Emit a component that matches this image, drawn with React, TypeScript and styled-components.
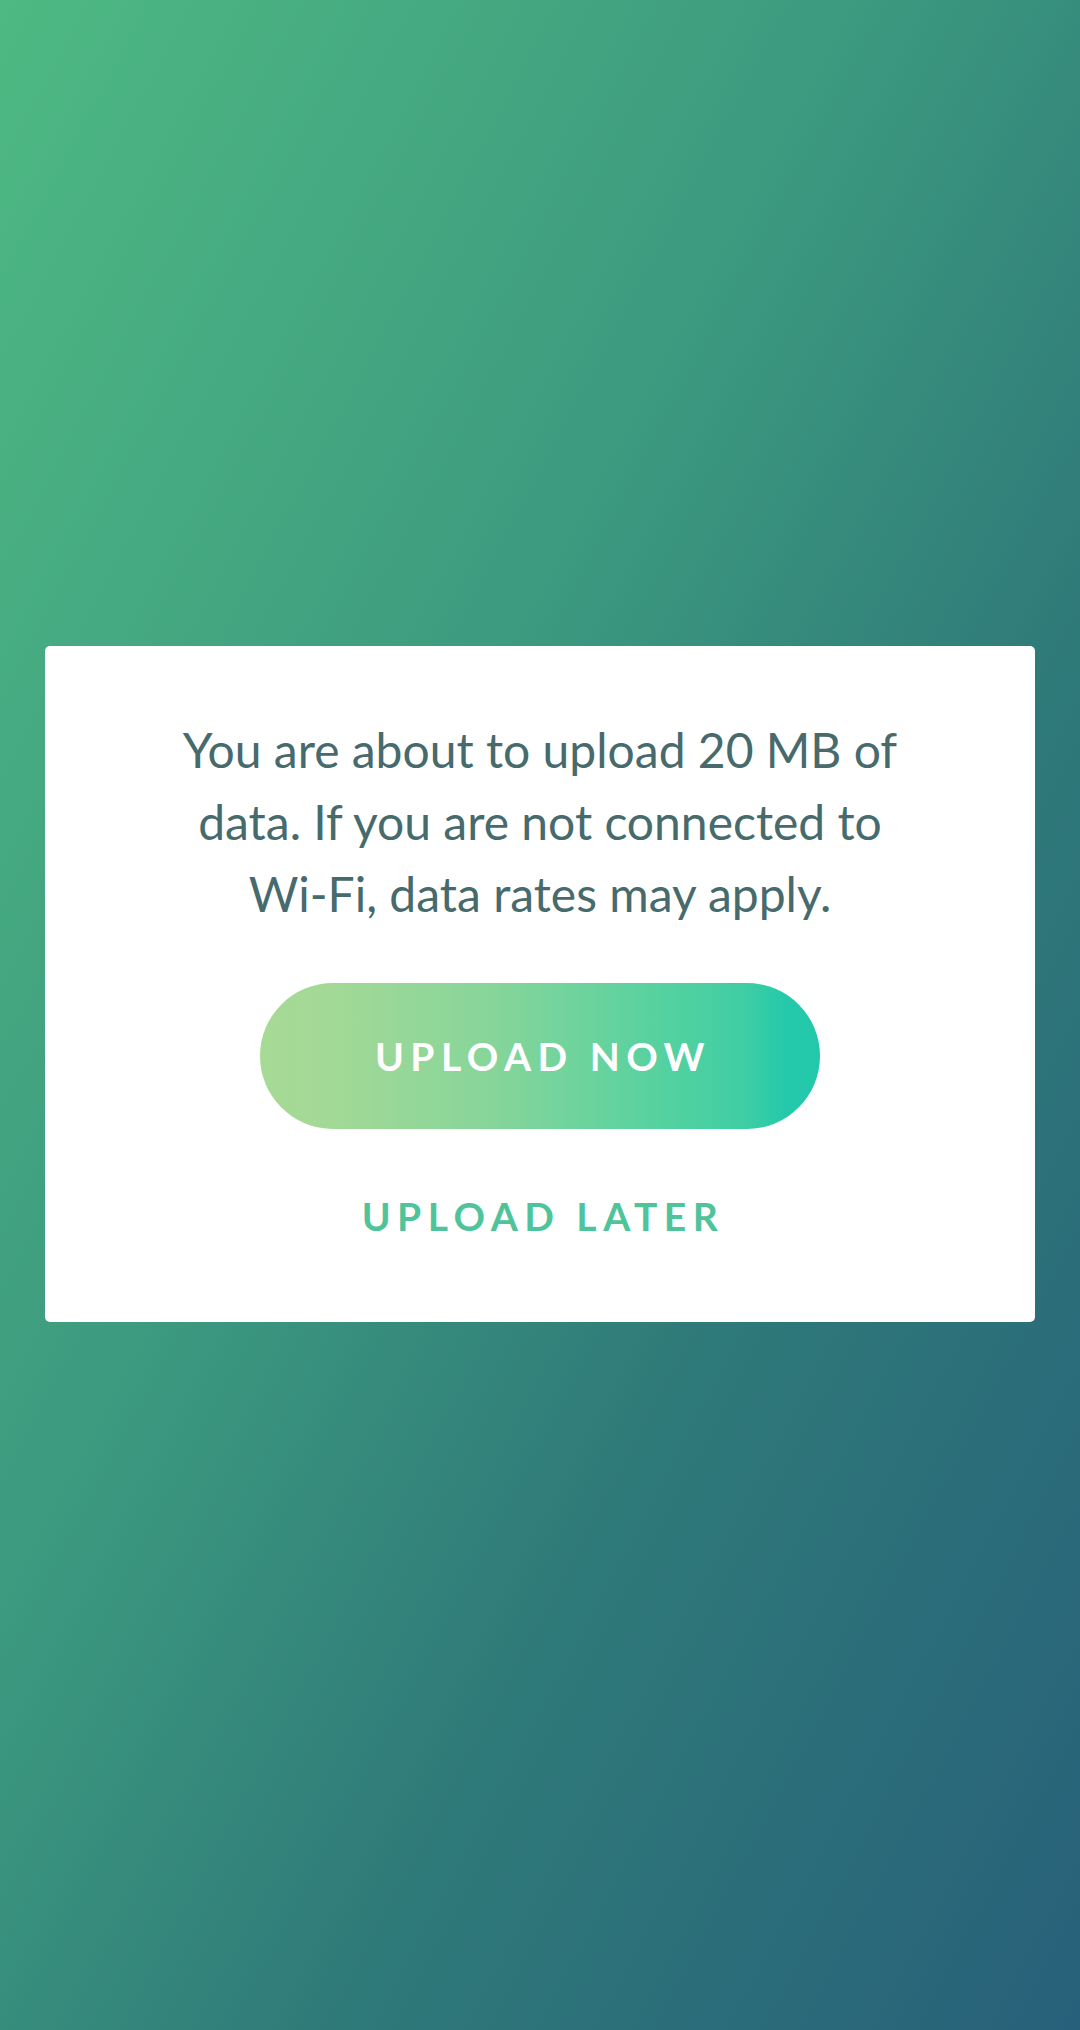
import React from 'react';
import styled, { createGlobalStyle } from 'styled-components';

const GlobalStyle = createGlobalStyle`
  html, body {
    margin: 0;
    padding: 0;
  }
  body {
    font-family: Lato, "Open Sans", sans-serif;
  }
`;

const Screen = styled.div`
  width: 1080px;
  height: 2030px;
  display: flex;
  align-items: flex-start;
  justify-content: center;
  padding-top: 646px;
  box-sizing: border-box;
  background: linear-gradient(to bottom right, #4eb983 0%, #3c9a7f 40%, #2f7a79 65%, #27607a 100%);
`;

const Dialog = styled.div`
  width: 990px;
  box-sizing: border-box;
  background: #ffffff;
  border-radius: 5px;
  padding: 68px 60px 83px;
  display: flex;
  flex-direction: column;
  align-items: center;
`;

const Message = styled.p`
  margin: 0;
  max-width: 730px;
  font-family: Lato, sans-serif;
  font-size: 48px;
  line-height: 72px;
  color: #476a6d;
  text-align: center;
`;

const ActionLabel = styled.span`
  font-family: Lato, sans-serif;
  font-weight: 700;
  font-size: 39px;
  letter-spacing: 6.5px;
  text-transform: uppercase;
`;

const PrimaryButton = styled.button`
  margin-top: 53px;
  width: 560px;
  height: 146px;
  border: none;
  border-radius: 73px;
  display: flex;
  align-items: center;
  justify-content: center;
  padding: 0 0 0 6px;
  color: #ffffff;
  cursor: pointer;
  background: linear-gradient(
    90deg,
    #a6da95 0%,
    #a3d996 12%,
    #86d59a 42%,
    #55d1a0 72%,
    #40cea4 86%,
    #24c9aa 94%,
    #22c8aa 100%
  );
`;

const TextButton = styled.button`
  margin-top: 64px;
  height: 46px;
  border: none;
  background: none;
  padding: 0 0 0 6px;
  color: #4fc49b;
  cursor: pointer;
  line-height: 46px;
`;

export default function App() {
  return (
    <>
      <GlobalStyle />
      <Screen>
        <Dialog>
          <Message>
            You are about to upload 20 MB of data. If you are not connected to Wi-Fi, data rates may apply.
          </Message>
          <PrimaryButton>
            <ActionLabel>Upload Now</ActionLabel>
          </PrimaryButton>
          <TextButton>
            <ActionLabel>Upload Later</ActionLabel>
          </TextButton>
        </Dialog>
      </Screen>
    </>
  );
}
